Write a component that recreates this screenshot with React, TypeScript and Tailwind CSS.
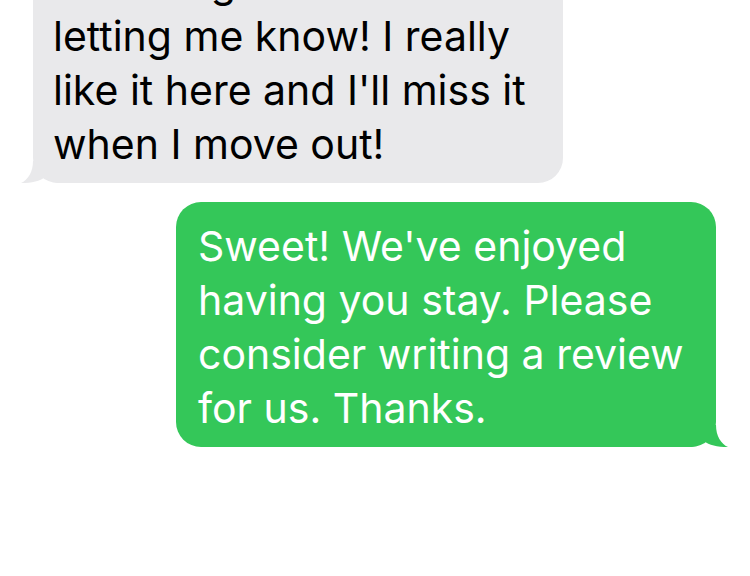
const incoming = [
  'Sounds good! Thanks for',
  'letting me know! I really',
  "like it here and I'll miss it",
  'when I move out!',
];

const outgoing = [
  "Sweet! We've enjoyed",
  'having you stay. Please',
  'consider writing a review',
  'for us. Thanks.',
];

// little curled tail under the bubble, drawn for the right side and mirrored for the left
const Tail = ({ color, side }: { color: string; side: 'left' | 'right' }) => (
  <svg
    width="37"
    height="27"
    viewBox="0 0 37 27"
    className={
      side === 'right'
        ? 'absolute bottom-0 right-[-12px]'
        : 'absolute bottom-0 left-[-12px] -scale-x-100'
    }
  >
    <path d="M0 27 C6 26 10 24 13 21 C18 25 26 27 37 27 C30 24 25 16 25 5 L0 5 Z" fill={color} />
  </svg>
);

export default function App() {
  return (
    <div className="w-[750px] h-[576px] overflow-hidden bg-white font-['Inter','Roboto',sans-serif] text-[41px] leading-[54px]">
      <div className="flex flex-col -mt-[62px]">
        <div className="relative ml-[33px] w-[530px] rounded-[25px] bg-[#e9e9eb] pl-[20px] pt-[17px] pb-[12px] text-black">
          {incoming.map((line) => (
            <span key={line} className="block whitespace-nowrap">
              {line}
            </span>
          ))}
          <Tail color="#e9e9eb" side="left" />
        </div>

        <div className="relative mt-[19px] ml-[176px] w-[540px] rounded-[25px] bg-[#34c759] pl-[22px] pt-[17px] pb-[12px] text-white">
          {outgoing.map((line) => (
            <span key={line} className="block whitespace-nowrap">
              {line}
            </span>
          ))}
          <Tail color="#34c759" side="right" />
        </div>
      </div>
    </div>
  );
}
